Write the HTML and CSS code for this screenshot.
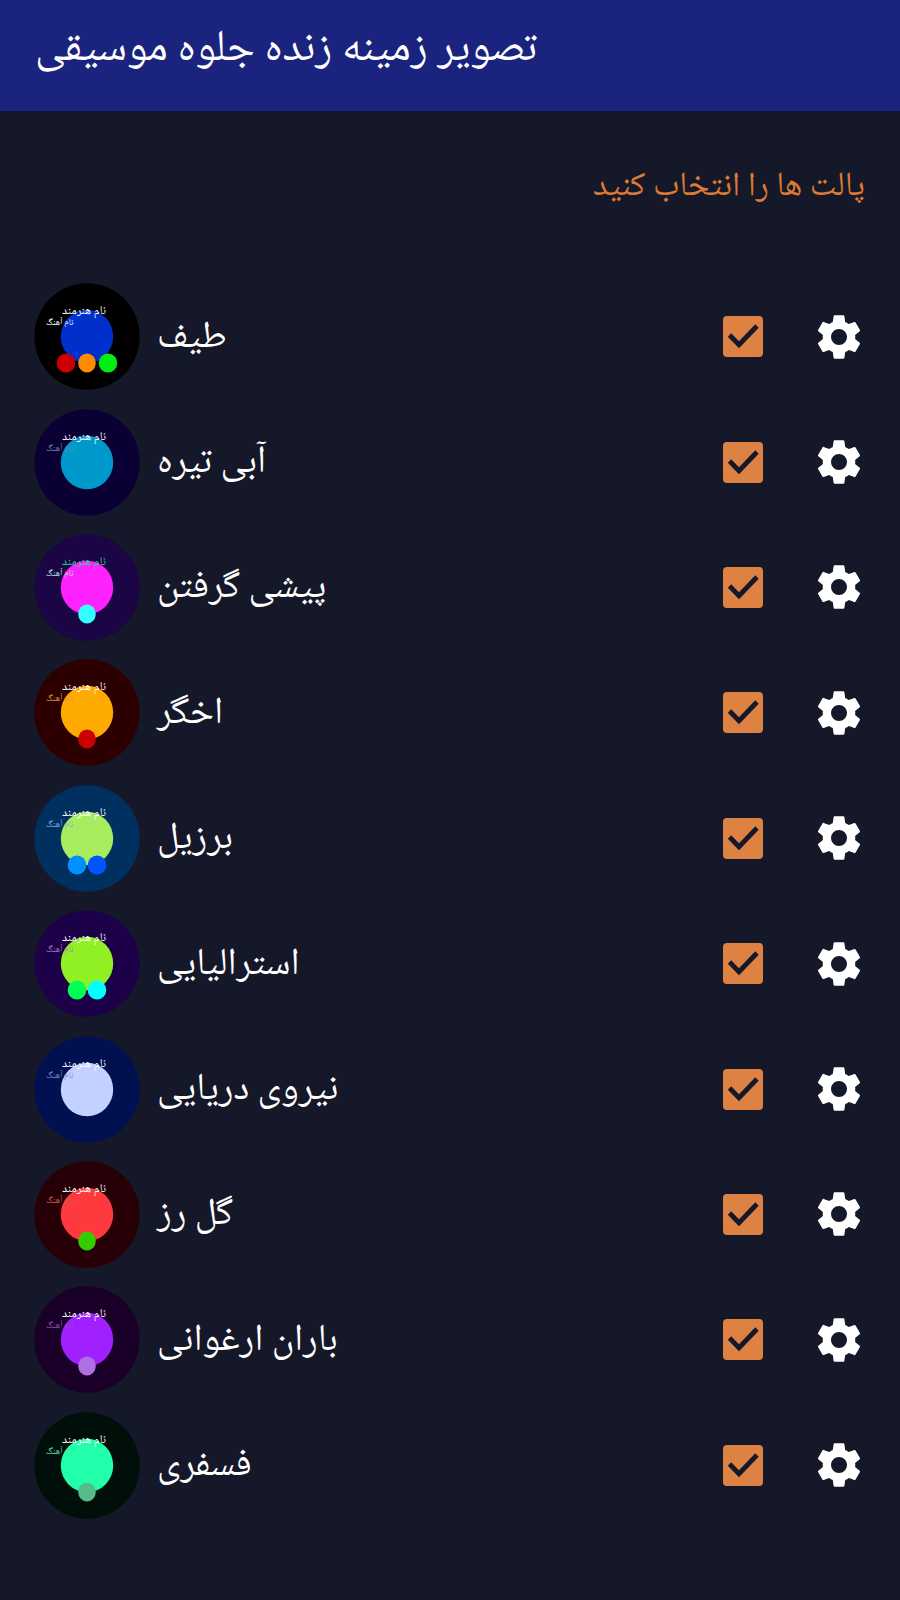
FILE: index.html
```html
<!DOCTYPE html>
<html lang="fa">
<head>
<meta charset="utf-8">
<meta name="viewport" content="width=device-width, initial-scale=1">
<title>تصویر زمینه زنده جلوه موسیقی</title>
<link rel="stylesheet" href="styles.css">
</head>
<body>
<header class="app-bar"><h1 class="app-title">تصویر زمینه زنده جلوه موسیقی</h1></header>
<main class="content">
<h2 class="section-title" dir="rtl">پالت ها را انتخاب کنید</h2>
<ul class="palettes" id="palettes"></ul>
</main>
<script src="palettes.js"></script>
</body>
</html>
```
FILE: styles.css
```css
* { box-sizing: border-box; }
body {
  margin: 0;
  min-height: 100vh;
  display: flex;
  flex-direction: column;
  background: #151828;
  color: #fff;
  font-family: "Noto Naskh Arabic UI", "Noto Naskh Arabic", "Noto Sans Arabic", "DejaVu Sans", sans-serif;
}
.app-bar {
  padding: 17px 35px 30px;
  background: #1a237e;
}
.app-title { margin: 0; font-size: 44px; font-weight: 400; line-height: 64px; }
.content {
  flex: 1;
  display: flex;
  flex-direction: column;
  padding: 48px 35px 72px 34px;
}
.section-title {
  margin: 0 0 59px;
  color: #dd7a33;
  font-size: 34px;
  font-weight: 400;
  line-height: 56px;
}
.palettes {
  flex: 1;
  display: grid;
  grid-auto-rows: 1fr;
  margin: 0;
  padding: 0;
  list-style: none;
}
.palette {
  display: flex;
  align-items: center;
}
.preview { flex: none; width: 106px; height: 107px; }
.artist { font-size: 12px; }
.song { font-size: 9px; }
.name {
  flex: 1;
  padding-left: 17px;
  font-size: 38px;
  line-height: 64px;
}
.tick { display: grid; flex: none; width: 40px; height: 41px; }
.tick-input, .tick-mark { grid-area: 1 / 1; width: 100%; height: 100%; margin: 0; }
.tick-input {
  appearance: none;
  border: 3px solid #dd8243;
  border-radius: 4px;
}
.tick-input:checked { background: #dd8243; }
.tick-mark { visibility: hidden; pointer-events: none; }
.tick-input:checked + .tick-mark { visibility: visible; }
.settings {
  flex: none;
  margin-left: 50px;
  padding: 0;
  width: 52px;
  height: 52px;
  border: 0;
  background: none;
  color: #fff;
}
.gear { display: block; width: 52px; height: 52px; }
```
FILE: palettes.js
```js
const palettes = [
  { name: 'طیف', bg: '#000000', main: '#0030cc', dots: ['#cc0000', '#ff8c00', '#00ee11'], artist: '#ffffff', song: '#ffffff' },
  { name: 'آبی تیره', bg: '#0a0033', main: '#0099cc', dots: [], artist: '#ffffff', song: '#6688aa' },
  { name: 'پیشی گرفتن', bg: '#1c0544', main: '#ff22ff', dots: ['#33ffff'], artist: '#33cc99', song: '#b0e8e0' },
  { name: 'اخگر', bg: '#2c0000', main: '#ffaa00', dots: ['#cc0000'], artist: '#ffffff', song: '#dd9944' },
  { name: 'برزیل', bg: '#003060', main: '#a8ec60', dots: ['#0090ff', '#0055ff'], artist: '#ffffff', song: '#84a8d8' },
  { name: 'استرالیایی', bg: '#1c0048', main: '#90f024', dots: ['#00ff55', '#00ffff'], artist: '#ffffff', song: '#aa77cc' },
  { name: 'نیروی دریایی', bg: '#001050', main: '#c4d0ff', dots: [], artist: '#ffffff', song: '#7788cc' },
  { name: 'گل رز', bg: '#260006', main: '#ff3a3e', dots: ['#33cc00'], artist: '#ffffff', song: '#cc5c5c' },
  { name: 'باران ارغوانی', bg: '#1a0028', main: '#a020ff', dots: ['#b070e0'], artist: '#ffffff', song: '#9050b8' },
  { name: 'فسفری', bg: '#000f0a', main: '#22ffaa', dots: ['#55bb88'], artist: '#ffffff', song: '#66ddaa' }
];

const dotCentres = { 0: [], 1: [53], 2: [43, 63], 3: [32, 53, 74] };

function dots(colours) {
  return colours.map((colour, i) => {
    const x = dotCentres[colours.length][i];
    return `<ellipse cx="${x}" cy="80" rx="${x === 53 ? 8.8 : 9.3}" ry="9.5" fill="${colour}"/>`;
  }).join('');
}

document.getElementById('palettes').innerHTML = palettes.map((p, i) => `
<li class="palette">
  <svg class="preview" viewBox="0 0 106 107">
    <ellipse cx="53" cy="53.5" rx="52.7" ry="53.3" fill="${p.bg}"/>
    <ellipse cx="53" cy="53.5" rx="26.2" ry="26.7" fill="${p.main}"/>
    ${dots(p.dots)}
    <text class="artist" x="28" y="33" fill="${p.artist}">نام هنرمند</text>
    <text class="song" x="12" y="43" fill="${p.song}">نام آهنگ</text>
  </svg>
  <label class="name" for="palette-${i}">${p.name}</label>
  <span class="tick">
    <input class="tick-input" type="checkbox" id="palette-${i}" checked>
    <svg class="tick-mark" viewBox="0 0 40 41"><path d="M6.5 19 16 28.7 34 10" fill="none" stroke="#151828" stroke-width="4.8"/></svg>
  </span>
  <button class="settings" type="button" aria-label="${p.name}">
    <svg class="gear" viewBox="0 0 24 24"><path fill="currentColor" d="M19.43 12.98c.04-.32.07-.64.07-.98s-.03-.66-.07-.98l2.11-1.65c.19-.15.24-.42.12-.64l-2-3.46c-.12-.22-.39-.3-.61-.22l-2.49 1c-.52-.4-1.08-.73-1.69-.98l-.38-2.65C14.46 2.18 14.25 2 14 2h-4c-.25 0-.46.18-.49.42l-.38 2.65c-.61.25-1.17.59-1.69.98l-2.49-1c-.23-.09-.49 0-.61.22l-2 3.46c-.13.22-.07.49.12.64l2.11 1.65c-.04.32-.07.65-.07.98s.03.66.07.98l-2.11 1.65c-.19.15-.24.42-.12.64l2 3.46c.12.22.39.3.61.22l2.49-1c.52.4 1.08.73 1.69.98l.38 2.65c.03.24.24.42.49.42h4c.25 0 .46-.18.49-.42l.38-2.65c.61-.25 1.17-.59 1.69-.98l2.49 1c.23.09.49 0 .61-.22l2-3.46c.12-.22.07-.49-.12-.64l-2.11-1.65zM12 15.7a3.7 3.7 0 1 1 0-7.4 3.7 3.7 0 0 1 0 7.4z"/></svg>
  </button>
</li>`).join('');
```
